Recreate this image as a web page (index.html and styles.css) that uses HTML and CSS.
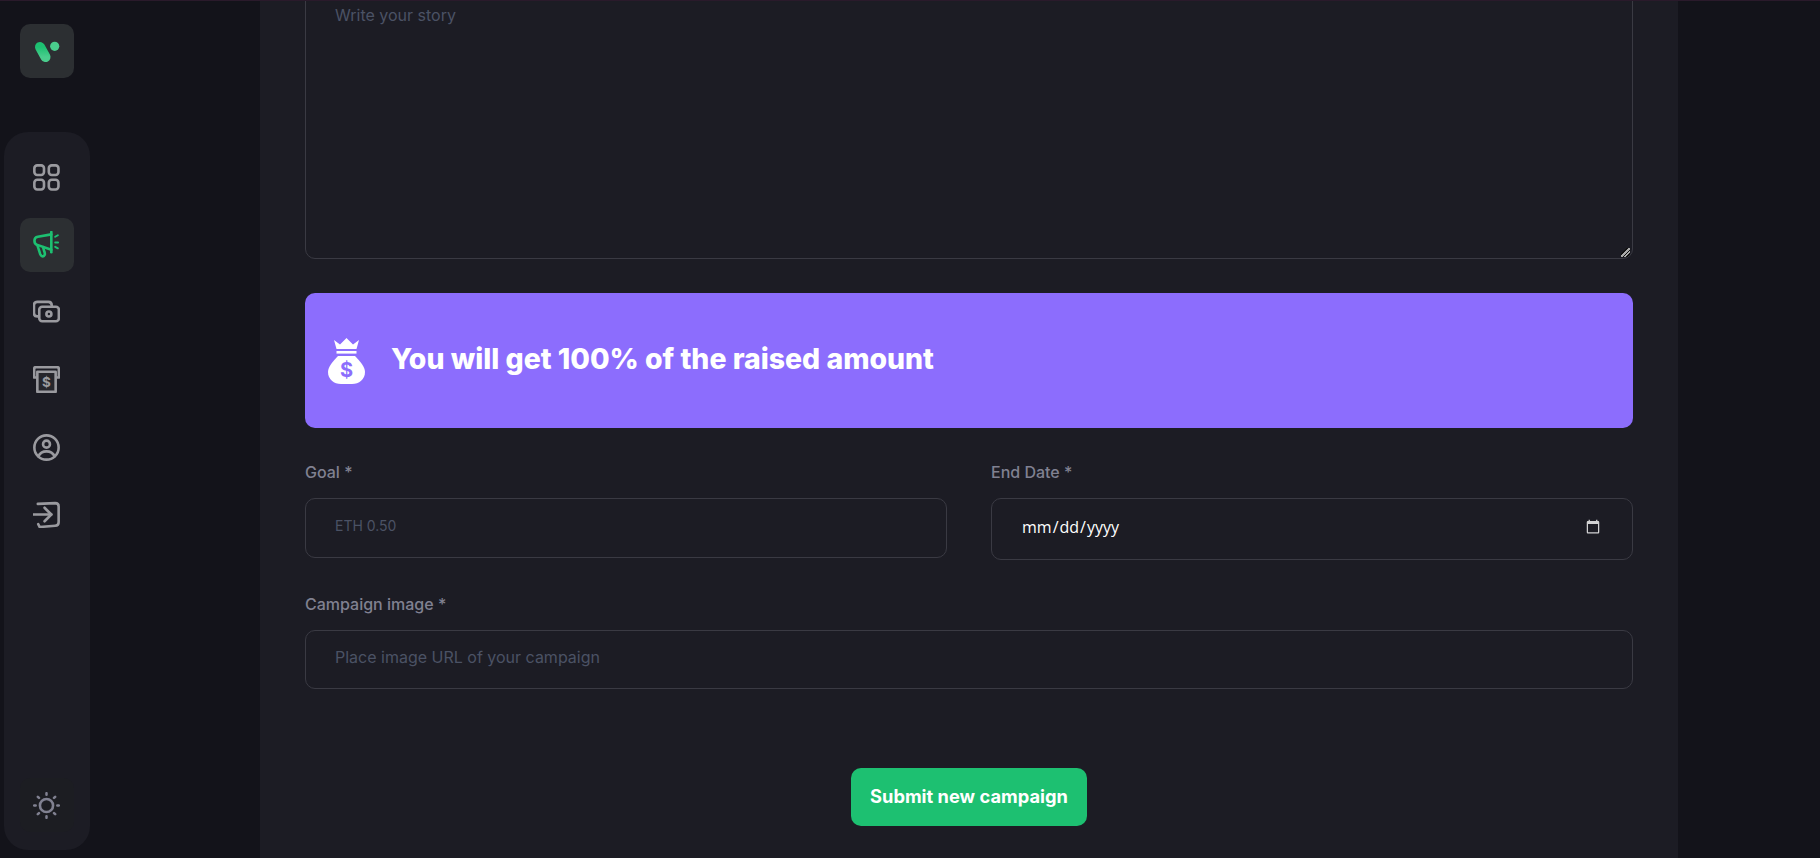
FILE: index.html
```html
<!DOCTYPE html>
<html lang="en">
<head>
    <meta charset="UTF-8">
    <meta name="viewport" content="width=device-width, initial-scale=1.0">
    <title>Start a Campaign</title>
    <link rel="stylesheet" href="styles.css">
</head>
<body>
    <div class="page">
        <aside class="sidebar">
            <a class="logo" href="#">
                <svg width="54" height="54" viewBox="0 0 54 54">
                    <defs>
                        <linearGradient id="logoGreen" x1="0" y1="0" x2="0" y2="1">
                            <stop offset="0" stop-color="#1dc071"/>
                            <stop offset="1" stop-color="#4acd8d"/>
                        </linearGradient>
                    </defs>
                    <path d="M20 23 L25.5 33" stroke="url(#logoGreen)" stroke-width="10" stroke-linecap="round" fill="none"/>
                    <circle cx="34.7" cy="22.3" r="4.6" fill="#4acd8d"/>
                </svg>
            </a>
            <nav class="nav-panel">
                <a class="nav-item" href="#">
                    <svg class="icon" viewBox="0 0 28 28">
                        <rect x="1.4" y="1.4" width="10" height="10" rx="3"/>
                        <rect x="16.4" y="1.4" width="10" height="10" rx="3"/>
                        <rect x="1.4" y="16.4" width="10" height="10" rx="3"/>
                        <rect x="16.4" y="16.4" width="10" height="10" rx="3"/>
                    </svg>
                </a>
                <a class="nav-item active" href="#">
                    <svg class="icon" viewBox="0 0 28 28">
                        <path d="M19 1 V22"/>
                        <path d="M19 3.5 L5 6 Q1.5 6.6 1.5 10 Q1.5 13.6 4.5 14.4 L19 19.5"/>
                        <path d="M4.6 15 L7.4 23.8 Q9 27.4 11.4 25.8 Q13 24.4 11.8 21.6 L10.4 16.6"/>
                        <path d="M23 6 L25.8 4.4 M23 12 H26 M23 16.4 L25.8 18" stroke-width="2"/>
                    </svg>
                </a>
                <a class="nav-item" href="#">
                    <svg class="icon" viewBox="0 0 28 28">
                        <path d="M6 18 H4.5 Q1 18 1 14.5 V6.5 Q1 3 4.5 3 H16 Q19.5 3 19.5 7"/>
                        <rect x="6.5" y="8" width="20.3" height="15" rx="3"/>
                        <circle cx="16.5" cy="15.5" r="2.6"/>
                    </svg>
                </a>
                <a class="nav-item" href="#">
                    <svg class="icon" viewBox="0 0 28 28">
                        <path d="M4 12 H1.2 V3 Q1.2 1.2 3 1.2 H25 Q26.8 1.2 26.8 3 V12 H24"/>
                        <rect class="slot" x="4.5" y="6" width="19" height="20.8"/>
                        <text class="dollar" x="14" y="21.5" text-anchor="middle">$</text>
                    </svg>
                </a>
                <a class="nav-item" href="#">
                    <svg class="icon" viewBox="0 0 28 28">
                        <circle cx="14" cy="14" r="12.6"/>
                        <circle cx="14" cy="10.5" r="3.6"/>
                        <path d="M5.5 23.2 Q8 18 14 18 Q20 18 22.5 23.2"/>
                    </svg>
                </a>
                <a class="nav-item" href="#">
                    <svg class="icon" viewBox="0 0 28 28">
                        <path d="M0 14 H19"/>
                        <path d="M12 7 L19 14 L12 21"/>
                        <path d="M5 3 L23 2.2 Q26.6 2.2 26.6 5.6 V22 Q26.6 25.4 23 25.6 L7 27 L5.4 24"/>
                    </svg>
                </a>
                <a class="nav-item theme" href="#">
                    <svg class="icon sun" viewBox="0 0 28 28">
                        <circle cx="14" cy="14" r="6.8"/>
                        <path class="rays" d="M14 1.2 V2.8 M14 25.2 V26.8 M1.2 14 H2.8 M25.2 14 H26.8 M5 5 L6.2 6.2 M21.8 21.8 L23 23 M5 23 L6.2 21.8 M21.8 6.2 L23 5"/>
                    </svg>
                </a>
            </nav>
        </aside>
        <main class="content">
            <form class="campaign-form">
                <textarea class="field story" placeholder="Write your story"></textarea>
                <div class="banner">
                    <svg class="bag" viewBox="0 0 37 46">
                        <path d="M6 2 L12 6.5 L18.5 0 L25 6.5 L31 2 L28.5 11 H8.5 Z"/>
                        <rect x="8.5" y="13" width="20" height="2.6"/>
                        <path d="M10 18 H27 C32 23 37 29 37 34 C37 41.5 31 46 24 46 H13 C6 46 0 41.5 0 34 C0 29 5 23 10 18 Z"/>
                        <text class="bag-sign" x="18.5" y="39" text-anchor="middle">$</text>
                    </svg>
                    <h4 class="banner-text">You will get 100% of the raised amount</h4>
                </div>
                <div class="row">
                    <label class="form-group">
                        <span class="label">Goal *</span>
                        <input class="field amount" type="text" placeholder="ETH 0.50">
                    </label>
                    <label class="form-group">
                        <span class="label">End Date *</span>
                        <input class="field date" type="date">
                    </label>
                </div>
                <label class="form-group">
                    <span class="label">Campaign image *</span>
                    <input class="field" type="url" placeholder="Place image URL of your campaign">
                </label>
                <div class="actions">
                    <button class="btn" type="button">Submit new campaign</button>
                </div>
            </form>
        </main>
    </div>
</body>
</html>
```

FILE: styles.css
```css
* {
    box-sizing: border-box;
}
html, body {
    margin: 0;
    height: 100%;
    overflow: hidden;
}
body {
    background-color: #13131a;
    font-family: Inter, "Liberation Sans", sans-serif;
    color: #808191;
}
.page {
    display: flex;
    height: 858px;
    border-top: 1px solid #2a1a2b;
}
.sidebar {
    width: 94px;
    padding: 23px 0 8px 4px;
    display: flex;
    flex-direction: column;
    flex-shrink: 0;
}
.logo {
    width: 54px;
    height: 54px;
    margin-left: 16px;
    margin-bottom: 54px;
    background-color: #2c2f32;
    border-radius: 10px;
    display: block;
}
.logo svg {
    display: block;
}
.nav-panel {
    flex: 1;
    width: 86px;
    padding: 18px 0 18px 16px;
    background-color: #1c1c24;
    border-radius: 24px;
    display: flex;
    flex-direction: column;
    gap: 13.6px;
}
.nav-item {
    width: 54px;
    height: 54px;
    border-radius: 10px;
    display: flex;
    align-items: center;
    justify-content: center;
    flex-shrink: 0;
}
.nav-item.active {
    background-color: #2c2f32;
}
.nav-item.theme {
    margin-top: auto;
    background-color: #1c1d22;
}
.icon {
    width: 27px;
    height: 27px;
    margin-right: 1px;
    fill: none;
    stroke: #9a9a9f;
    stroke-width: 2.7;
    stroke-linecap: round;
    stroke-linejoin: round;
}
.active .icon {
    stroke: #1dc071;
}
.icon.sun {
    stroke: #808191;
}
.rays {
    stroke-width: 2.6;
}
.slot {
    fill: #26262c;
}
.dollar {
    fill: #9a9a9f;
    stroke: none;
    font-size: 14px;
    font-weight: 700;
}
.content {
    width: 1418px;
    height: 857px;
    margin-left: 166px;
    padding: 0 45px 32px;
    background-color: #1c1c24;
    overflow: hidden;
    display: flex;
    flex-direction: column;
    justify-content: flex-end;
}
.campaign-form {
    display: flex;
    flex-direction: column;
}
.field {
    display: block;
    width: 100%;
    height: 59px;
    padding: 0 29px 5px;
    background: transparent;
    border: 1px solid #3a3a43;
    border-radius: 10px;
    outline: none;
    color: #fff;
    font-family: inherit;
    font-size: 16px;
}
.field::placeholder {
    color: #4b5264;
}
.amount {
    height: 60px;
    font-size: 14px;
}
.story {
    height: 269px;
    padding: 14px 29px;
    margin-bottom: 34px;
    resize: vertical;
    color-scheme: dark;
}
.story::-webkit-resizer {
    background: linear-gradient(135deg, transparent 30%, #111 30% 42%, #aaa 42% 58%, #111 58% 66%, #aaa 66% 76%, #111 76% 84%, transparent 84%) no-repeat right 2px bottom 1px / 9px 9px;
}
.date {
    height: 62px;
    color-scheme: dark;
    font-family: "Open Sans", sans-serif;
}
.date::-webkit-calendar-picker-indicator {
    opacity: 0.8;
}
.banner {
    height: 135px;
    padding-left: 23px;
    margin-bottom: 33px;
    background-color: #8c6dfd;
    border-radius: 10px;
    display: flex;
    align-items: center;
    gap: 26px;
}
.bag {
    width: 37px;
    height: 46px;
    fill: #fff;
    flex-shrink: 0;
}
.bag-sign {
    fill: #8c6dfd;
    font-size: 20px;
    font-weight: 700;
}
.banner-text {
    margin: 0;
    padding-bottom: 4px;
    color: #fff;
    font-size: 28.4px;
    font-weight: 800;
    line-height: 38px;
}
.row {
    display: grid;
    grid-template-columns: 1fr 1fr;
    gap: 44px;
    align-items: start;
    margin-bottom: 33px;
}
.form-group {
    display: block;
}
.label {
    display: block;
    height: 22px;
    margin-bottom: 15px;
    font-size: 16px;
    font-weight: 500;
    line-height: 22px;
}
.actions {
    display: flex;
    justify-content: center;
    margin-top: 79px;
}
.btn {
    width: 236px;
    height: 58px;
    padding-bottom: 4px;
    background-color: #1dc071;
    border: none;
    border-radius: 10px;
    color: #fff;
    font-family: inherit;
    font-size: 18.3px;
    font-weight: 700;
    cursor: pointer;
}
```
